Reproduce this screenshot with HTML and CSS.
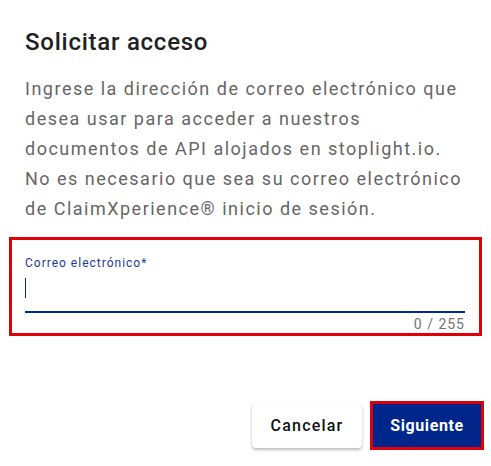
FILE: index.html
```html
<!DOCTYPE html>
<html lang="es">
<head>
<meta charset="utf-8">
<title>Solicitar acceso</title>
<link rel="stylesheet" href="styles.css">
</head>
<body>
<div class="dialog">
  <h2 class="title">Solicitar acceso</h2>
  <p class="desc">Ingrese la dirección de correo electrónico que<br>desea usar para acceder a nuestros<br>documentos de API alojados en stoplight.io.<br>No es necesario que sea su correo electrónico<br>de ClaimXperience® inicio de sesión.</p>
  <div class="field">
    <div class="label">Correo electrónico*</div>
    <div class="input"><span class="caret"></span></div>
    <div class="counter">0 / 255</div>
  </div>
  <div class="actions">
    <button class="btn btn-cancel" type="button">Cancelar</button>
    <button class="btn btn-next" type="button">Siguiente</button>
  </div>
</div>
</body>
</html>
```
FILE: styles.css
```css
* { box-sizing: border-box; }
html, body { margin: 0; padding: 0; background: #fff; }
body {
  font-family: Roboto, "Liberation Sans", sans-serif;
  width: 491px;
  height: 466px;
  overflow: hidden;
}
.dialog {
  padding: 26px 6px 0 9px;
}
.title {
  margin: 0 0 16px 16px;
  font-size: 24px;
  line-height: 32px;
  font-weight: 500;
  letter-spacing: 0.75px;
  color: #212121;
}
.desc {
  margin: 0 0 13px 16px;
  font-size: 18px;
  line-height: 30px;
  color: #666666;
  letter-spacing: 1.5px;
  white-space: nowrap;
}
.field {
  width: 473px;
  border: 3px solid #e0000a;
  padding: 15px 14px 0 13px;
  height: 99px;
}
.label {
  font-size: 12px;
  line-height: 16px;
  letter-spacing: 1px;
  color: #1a3a9a;
}
.input {
  height: 42px;
  padding-top: 7px;
  border-bottom: 2px solid #002a8f;
}
.caret {
  display: block;
  width: 1px;
  height: 20px;
  background: #002a8f;
}
.counter {
  text-align: right;
  font-size: 14px;
  line-height: 18px;
  letter-spacing: 1px;
  color: #757575;
  padding-top: 2px;
}
.actions {
  display: flex;
  justify-content: flex-end;
  align-items: center;
  gap: 8px;
  margin-top: 65px;
  padding-right: 1px;
}
.btn {
  font-family: Roboto, "Liberation Sans", sans-serif;
  font-size: 16px;
  font-weight: 500;
  cursor: pointer;
}
.btn-cancel {
  width: 110px;
  height: 44px;
  border: none;
  border-radius: 4px;
  background: #fff;
  color: #111;
  letter-spacing: 1.2px;
  box-shadow: 0 2px 3px rgba(0,0,0,0.25), 0 0 1px rgba(0,0,0,0.12);
}
.btn-next {
  width: 114px;
  height: 49px;
  border: 3px solid #e0000a;
  background: #00268c;
  color: #fff;
  font-weight: 700;
  letter-spacing: 0.6px;
}
```
